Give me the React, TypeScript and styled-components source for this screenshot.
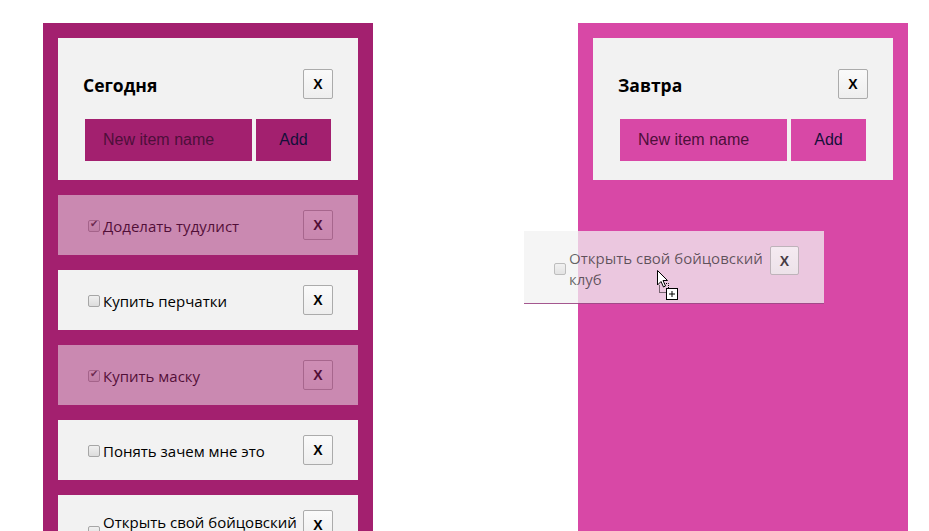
import styled, { createGlobalStyle } from "styled-components";

const GlobalStyle = createGlobalStyle`
  html, body {
    margin: 0;
    padding: 0;
    background: #fff;
    overflow: hidden;
  }
  body {
    font-family: "Open Sans", "Liberation Sans", sans-serif;
  }
`;

const Board = styled.div`
  position: relative;
  display: flex;
  align-items: stretch;
  gap: 205px;
  padding: 23px 0 0 43px;
  min-height: 600px;
`;

const Column = styled.section<{ $color: string }>`
  width: 330px;
  box-sizing: border-box;
  padding: 15px;
  background: ${(p) => p.$color};
  display: flex;
  flex-direction: column;
  gap: 15px;
`;

const Header = styled.div`
  background: #f2f2f2;
  padding: 31px 25px 19px;
  display: flex;
  flex-direction: column;
  gap: 20px;
`;

const TitleRow = styled.div`
  display: flex;
  align-items: center;
  justify-content: space-between;
`;

const Title = styled.h2`
  margin: 0;
  padding-top: 2px;
  font-size: 17.5px;
  font-weight: 700;
  color: #000;
`;

const CloseBtn = styled.button`
  width: 30px;
  height: 30px;
  flex: none;
  padding: 0;
  border: 1px solid #ababab;
  border-radius: 2px;
  background: linear-gradient(#fafafa, #eeeeee);
  font-family: "Liberation Sans", Arial, sans-serif;
  font-weight: 700;
  font-size: 14px;
  color: #000;
`;

const Form = styled.form`
  display: flex;
  gap: 4px;
  padding: 0 2px;
`;

const NameInput = styled.input<{ $color: string }>`
  width: 167px;
  height: 42px;
  box-sizing: border-box;
  border: 0;
  padding: 0 0 0 18px;
  background: ${(p) => p.$color};
  font-family: "Liberation Sans", Arial, sans-serif;
  font-size: 16px;
  outline: none;

  &::placeholder {
    color: #4d0f3a;
  }
`;

const AddBtn = styled.button<{ $color: string }>`
  width: 75px;
  height: 42px;
  border: 0;
  background: ${(p) => p.$color};
  font-family: "Liberation Sans", Arial, sans-serif;
  font-size: 16px;
  color: #14103a;
`;

const Item = styled.div<{ $done?: boolean }>`
  background: #f2f2f2;
  padding: 15px 25px;
  display: flex;
  align-items: center;
  gap: 3px;
  opacity: ${(p) => (p.$done ? 0.5 : 1)};

  ${CloseBtn} {
    align-self: flex-start;
  }
`;

const Label = styled.label`
  flex: 1;
  display: flex;
  align-items: center;
  padding-top: 2px;
  font-size: 15px;
  line-height: 20px;
  color: #000;
`;

const Check = styled.input`
  appearance: none;
  flex: none;
  position: relative;
  width: 12px;
  height: 12px;
  margin: 0 3px 0 5px;
  border: 1px solid #a6a6a6;
  border-radius: 2px;
  background: linear-gradient(#f0f0f0, #dcdcdc);

  &:checked::after {
    content: "✔";
    position: absolute;
    left: 1px;
    top: -3px;
    font-size: 10px;
    color: #333;
  }
`;

const Ghost = styled.div`
  position: absolute;
  left: 524px;
  top: 231px;
  width: 300px;
  box-sizing: border-box;
  background: rgba(242, 242, 242, 0.75);
  border-bottom: 1px solid rgba(130, 20, 100, 0.7);
  padding: 15px 25px 13px 25px;
  display: flex;
  align-items: center;
  gap: 3px;

  ${Label} {
    color: rgba(0, 0, 0, 0.6);
    line-height: 21px;
  }
  ${CloseBtn} {
    align-self: flex-start;
    width: 29px;
    height: 29px;
    opacity: 0.7;
  }
  ${Check} {
    opacity: 0.7;
  }
`;

const Cursor = styled.svg`
  position: absolute;
  left: 656px;
  top: 269px;
`;

type Todo = { text: string; done?: boolean };

const today: Todo[] = [
  { text: "Доделать тудулист", done: true },
  { text: "Купить перчатки" },
  { text: "Купить маску", done: true },
  { text: "Понять зачем мне это" },
  { text: "Открыть свой бойцовский клуб" },
];

const ListHeader = ({ title, color }: { title: string; color: string }) => (
  <Header>
    <TitleRow>
      <Title>{title}</Title>
      <CloseBtn>X</CloseBtn>
    </TitleRow>
    <Form onSubmit={(e) => e.preventDefault()}>
      <NameInput $color={color} placeholder="New item name" />
      <AddBtn $color={color}>Add</AddBtn>
    </Form>
  </Header>
);

const App = () => {
  return (
    <>
      <GlobalStyle />
      <Board>
        <Column $color="#a3206f">
          <ListHeader title="Сегодня" color="#a3206f" />
          {today.map((t) => (
            <Item key={t.text} $done={t.done}>
              <Label>
                <Check type="checkbox" defaultChecked={t.done} />
                <span>{t.text}</span>
              </Label>
              <CloseBtn>X</CloseBtn>
            </Item>
          ))}
        </Column>
        <Column $color="#d848a6">
          <ListHeader title="Завтра" color="#d848a6" />
        </Column>

        <Ghost>
          <Label>
            <Check type="checkbox" />
            <span>Открыть свой бойцовский клуб</span>
          </Label>
          <CloseBtn>X</CloseBtn>
        </Ghost>

        <Cursor width="26" height="34" viewBox="0 0 26 34">
          <path
            d="M1.5 1.5 L1.5 16 L5 12.5 L7.5 18 L9.5 17 L7 11.5 L11.5 11.5 Z"
            fill="#fff"
            stroke="#000"
            strokeWidth="1"
            strokeLinejoin="round"
          />
          <path
            d="M3.5 16.5 V23.5 H10.5 M8 14.5 H12.5 V19"
            fill="none"
            stroke="#000"
            strokeWidth="1"
            strokeDasharray="1 1"
          />
          <rect x="10.5" y="19.5" width="11" height="11" fill="#fff" stroke="#000" />
          <path d="M16 22 V28 M13 25 H19" stroke="#000" strokeWidth="1" />
        </Cursor>
      </Board>
    </>
  );
};

export default App;
